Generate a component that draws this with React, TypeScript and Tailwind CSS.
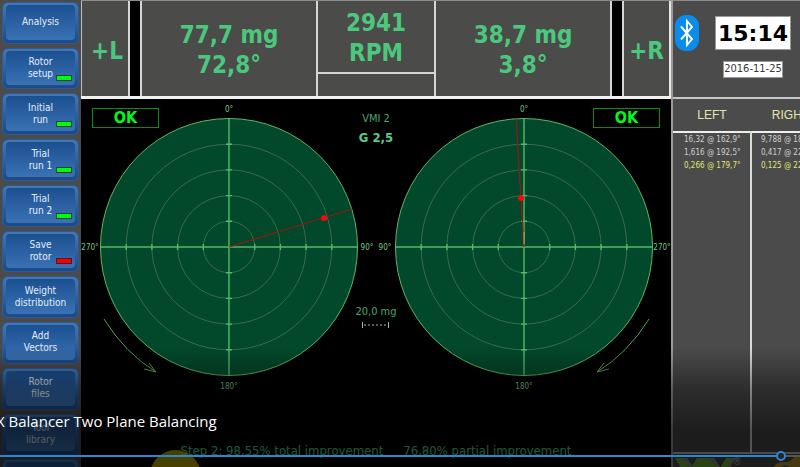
import React from "react";

type Light = "green" | "red";

const menu: { lines: string[]; light?: Light }[] = [
  { lines: ["Analysis"] },
  { lines: ["Rotor", "setup"], light: "green" },
  { lines: ["Initial", "run"], light: "green" },
  { lines: ["Trial", "run 1"], light: "green" },
  { lines: ["Trial", "run 2"], light: "green" },
  { lines: ["Save", "rotor"], light: "red" },
  { lines: ["Weight", "distribution"] },
  { lines: ["Add", "Vectors"] },
  { lines: ["Rotor", "files"] },
  { lines: ["Tool", "library"] },
  { lines: [] },
];

function MenuButton({ lines, light }: { lines: string[]; light?: Light }) {
  return (
    <button
      type="button"
      className="relative flex min-h-0 rounded-md border border-[#2c5c98] bg-linear-to-b from-[#4377b6] to-[#1c4a88] p-[3px] pt-[2px] text-[10px] leading-3 text-[#e4eefa]"
    >
      <span className="flex flex-1 flex-col items-center justify-center self-stretch rounded-[4px] bg-linear-to-b from-[#1b5090] to-[#3a72b4]">
        {lines.map((line) => (
          <span key={line}>{line}</span>
        ))}
      </span>
      {light && (
        <span
          className={`absolute right-[6px] bottom-[7px] h-[6px] w-[16px] border ${
            light === "green" ? "border-[#174a2c] bg-[#00fa10]" : "border-[#4a1722] bg-[#f80000]"
          }`}
        />
      )}
    </button>
  );
}

function OkBadge() {
  return (
    <div className="flex h-5 w-[67px] items-center justify-center border border-[#0d8a18] text-base font-bold text-[#00fa1a]">
      OK
    </div>
  );
}

const steps = [1, 2, 3, 4];

function PolarPlot({
  x,
  y,
  endX,
  endY,
  left,
  right,
  mirrored = false,
}: {
  x: number;
  y: number;
  endX: number;
  endY: number;
  left: string;
  right: string;
  mirrored?: boolean;
}) {
  return (
    <svg viewBox="0 1 295 300" className="block min-w-0 flex-1" fill="none">
      <circle cx="148" cy="149" r="128.5" fill="#02482a" stroke="#5fb565" />
      {steps.map((n) => (
        <circle key={n} cx="148" cy="149" r={n * 25.7} stroke="#3c6a4c" />
      ))}
      <g stroke="#56b86c" strokeWidth="1.4">
        <path d="M148 20V278M19 149H277" />
        {steps.map((n) => {
          const d = n * 25.7;
          return (
            <path
              key={n}
              d={`M${148 - d} 146v6M${148 + d} 146v6M145 ${149 - d}h6M145 ${149 + d}h6`}
            />
          );
        })}
      </g>
      <path d={`M148 149L${endX} ${endY}`} stroke="#8c1c16" strokeWidth="1.2" />
      {mirrored && <path d="M148 146L148 134" stroke="#d89a60" />}
      <circle cx={x} cy={y} r="3" fill="#f80808" />
      <g stroke="#5c9a5c" transform={mirrored ? "translate(296 0) scale(-1 1)" : undefined}>
        <path d="M23 221Q44 255 75 274M63 271L75 274L68 265" />
      </g>
      <g fill="#78c880" fontSize="8" textAnchor="middle">
        <text x="148" y="14">0°</text>
        <text x="148" y="291">180°</text>
        <text x="9" y="152">{left}</text>
        <text x="286" y="152">{right}</text>
      </g>
    </svg>
  );
}

function Reading({ children }: { children: React.ReactNode }) {
  return (
    <div className="flex flex-1 flex-col items-center justify-center border-x-2 border-[#d6d6d6] pt-[2px]">
      {children}
    </div>
  );
}

function Readings() {
  return (
    <header className="flex h-[99px] border-t border-b-[3px] border-t-[#8c8c8c] border-b-[#f2f2f2] bg-[#4b4b49] text-2xl leading-[30px] font-bold text-[#4cc87e]">
      <div className="flex w-[47px] items-center justify-center border-l border-[#bdbdbd] pt-1 pl-1">+L</div>
      <div className="w-3 border-l-2 border-[#d6d6d6] bg-black" />
      <Reading>
        <span>77,7 mg</span>
        <span>72,8°</span>
      </Reading>
      <div className="flex w-[116px] flex-col items-center">
        <div className="flex w-full flex-col items-center border-b-2 border-[#d6d6d6] pt-[7px] pb-[4px]">
          <span>2941</span>
          <span>RPM</span>
        </div>
      </div>
      <Reading>
        <span>38,7 mg</span>
        <span>3,8°</span>
      </Reading>
      <div className="w-3 border-r-2 border-[#d6d6d6] bg-black" />
      <div className="flex w-[47px] items-center justify-center border-r-2 border-[#e6e6e6] pt-1">+R</div>
    </header>
  );
}

const runs = [
  ["16,32 @ 162,9°", "9,788 @ 188,4°"],
  ["1,616 @ 192,5°", "0,417 @ 221,6°"],
  ["0,266 @ 179,7°", "0,125 @ 220,3°"],
];

function ResultsPanel() {
  return (
    <aside className="flex w-[129px] shrink-0 flex-col overflow-hidden border-l-2 border-[#9a9a9a] bg-[#4b4b4b]">
      <div className="flex h-[99px] shrink-0 gap-4 border-t border-b-2 border-t-[#8c8c8c] border-b-[#c8c8c8] pl-[2px]">
        <svg viewBox="0 0 24 36" className="mt-[14px] h-9 w-6 shrink-0" role="img" aria-label="Bluetooth">
          <rect width="24" height="36" rx="11" fill="#0a8cec" />
          <path d="M6 11.500L17 24L12 30V6L17 12L6 24.500" fill="none" stroke="#fff" strokeWidth="1.900" />
        </svg>
        <div className="flex flex-col items-center gap-[11px] pt-[15px]">
          <time className="flex h-[34px] w-[76px] items-center justify-center border border-[#999] bg-white font-['DejaVu_Sans',sans-serif] text-[22px] font-bold text-black">
            15:14
          </time>
          <time className="flex h-[17px] w-[60px] items-center justify-center border border-[#999] bg-white text-[11px] text-[#383838]">
            2016-11-25
          </time>
        </div>
      </div>
      <table className="h-[355px] w-[157px] shrink-0 table-fixed border-collapse border-b-2 border-[#c4c4c4] text-[8px] leading-3 text-[#d0d0d0]">
        <thead className="h-[33px] border-b-2 border-[#eee] font-['Liberation_Sans',Arial,sans-serif] text-xs text-[#e8e4b0]">
          <tr>
            <th scope="col" className="w-[78px] font-normal">LEFT</th>
            <th scope="col" className="font-normal">RIGHT</th>
          </tr>
        </thead>
        <tbody>
          {runs.map(([l, r], i) => (
            <tr key={l} className={`h-[13px] ${i === 2 ? "text-[#e4e476]" : ""}`}>
              <td className="border-r-2 border-[#dcdcdc] p-0 pt-px pl-[11px] whitespace-nowrap">{l}</td>
              <td className="p-0 pt-px pl-[9px] whitespace-nowrap">{r}</td>
            </tr>
          ))}
          <tr>
            <td className="border-r-2 border-[#dcdcdc]" />
            <td />
          </tr>
        </tbody>
      </table>
      <svg viewBox="0 0 127 14" className="h-[14px] w-[127px] shrink-0" aria-hidden="true">
        <path d="M2 4h8l7 10H8zM24 4h13l7 10H18zM53 4h7l-5 10h-8z" fill="#6eb038" />
        <path d="M10 4h4l7 10h-4zM37 4h4l7 10h-4zM60 4h2l-5 10h-2z" fill="#8a8a8a" />
        <text x="64" y="11" fontSize="10" textAnchor="middle" fill="#b4b4b4">®</text>
        <path d="M100 14q3-7 13-6q5 0 8-5h6v11h-9q-6-5-11 0z" fill="#bc9628" />
      </svg>
    </aside>
  );
}

export default function App() {
  return (
    <div className="relative flex h-screen overflow-hidden bg-black font-['DejaVu_Sans_Condensed','DejaVu_Sans',Tahoma,sans-serif]">
      <nav className="w-[81px] shrink-0 bg-[#4b4b4b] px-[2px] pt-[2px]">
        <div className="grid h-[499px] grid-rows-11 gap-1">
          {menu.map((item, i) => (
            <MenuButton key={i} {...item} />
          ))}
        </div>
      </nav>

      <main className="flex min-w-0 flex-1 flex-col">
        <Readings />
        <div className="grid">
          <div className="col-start-1 row-start-1 flex">
            <PolarPlot x={243} y={120} endX={271} endY={111} left="270°" right="90°" />
            <PolarPlot x={145} y={100} endX={140} endY={21} left="90°" right="270°" mirrored />
          </div>
          <div className="col-start-1 row-start-1 flex items-start justify-between px-[11px] pt-[9px] text-[#4ba672]">
            <OkBadge />
            <div className="flex flex-col items-center text-[11px]">
              <span className="leading-[22px]">VMI 2</span>
              <strong className="text-[13px] leading-4 text-[#5cc98c]">G 2,5</strong>
              <span className="mt-[158px] leading-4">20,0 mg</span>
              <svg viewBox="0 0 27 6" className="mt-[2px] h-[6px] w-[27px]" aria-hidden="true">
                <path d="M.5 0v6M26.500 0v6" stroke="#8ac896" />
                <path d="M2 3h23" stroke="#8ac896" strokeDasharray="2 2" />
              </svg>
            </div>
            <OkBadge />
          </div>
        </div>
        <p className="mt-[42px] flex justify-center gap-5 text-[13px] leading-5 whitespace-nowrap text-[#58e090]">
          <span>Step 2: 98,55% total improvement</span>
          <span>76,80% partial improvement</span>
        </p>
      </main>

      <ResultsPanel />

      {/* Player controls over the video */}
      <div className="absolute inset-x-0 bottom-0 h-[120px] bg-linear-to-b from-transparent via-black/40 via-35% to-black/62 to-70%" />
      <div className="absolute -bottom-[34px] left-[150px] size-[51px] rounded-full bg-[#5a5000]/80" />
      <h1 className="absolute bottom-[34px] -left-[4px] font-['Open_Sans','Noto_Sans',sans-serif] text-[15px] leading-6 whitespace-nowrap text-white">
        X Balancer Two Plane Balancing
      </h1>
      <div className="absolute inset-x-0 bottom-[10px] h-[2px] bg-linear-to-r from-[#2d86d2] from-97% to-[#565656] to-97%" />
      <input
        type="range"
        aria-label="Seek"
        min={0}
        max={1000}
        defaultValue={982}
        className="absolute inset-x-0 bottom-[6px] m-0 h-[10px] w-full appearance-none bg-transparent [&::-webkit-slider-thumb]:size-[10px] [&::-webkit-slider-thumb]:appearance-none [&::-webkit-slider-thumb]:rounded-full [&::-webkit-slider-thumb]:border-2 [&::-webkit-slider-thumb]:border-[#2d86d2] [&::-webkit-slider-thumb]:bg-[#20242a]"
      />
    </div>
  );
}
